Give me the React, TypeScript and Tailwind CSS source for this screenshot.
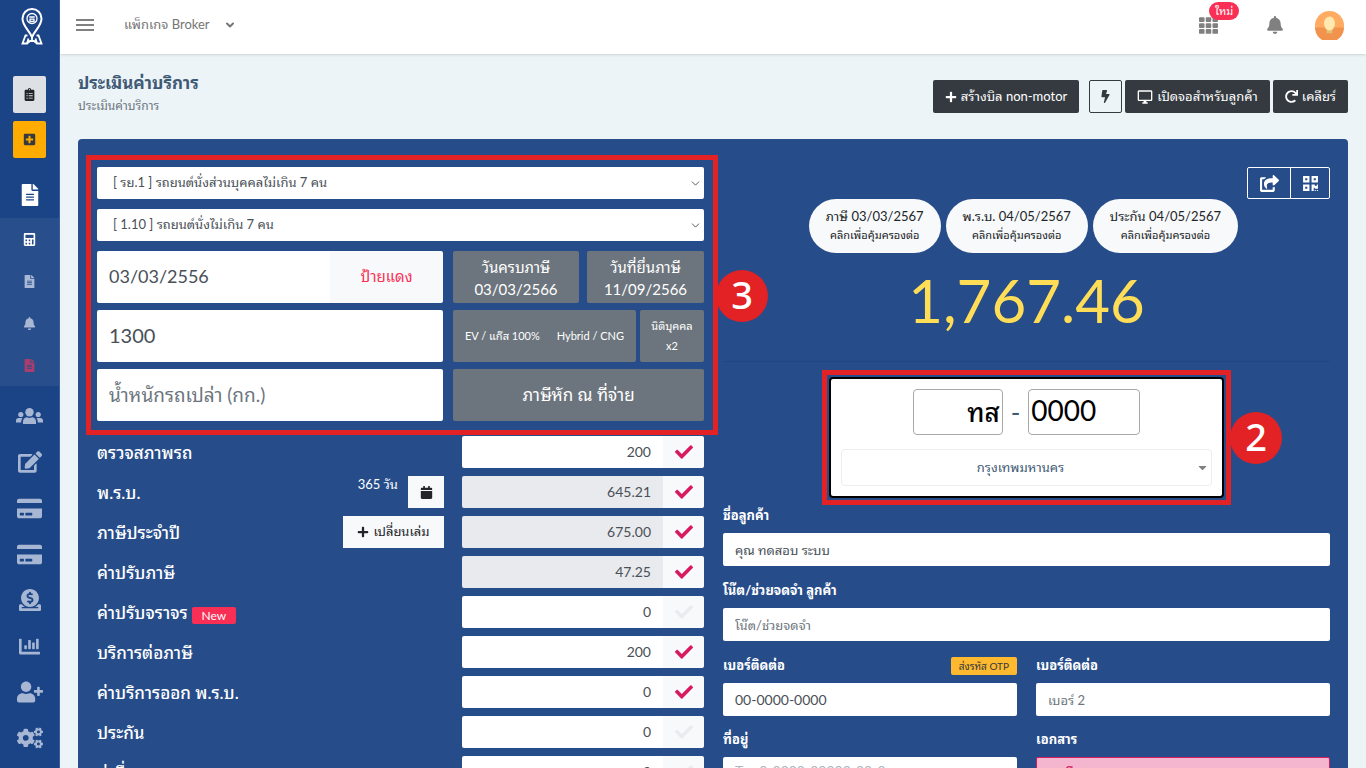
import React from 'react';
import {
  FaBell, FaBolt, FaCalculator, FaCalendar, FaCaretDown, FaChartBar, FaCheck, FaClipboardList,
  FaCogs, FaCreditCard, FaDonate, FaEdit, FaFileAlt, FaPlus, FaPlusSquare, FaQrcode, FaRedo,
  FaShareSquare, FaTh, FaUserPlus,
} from 'react-icons/fa';
import { FiChevronDown } from 'react-icons/fi';
import { MdOutlineDesktopWindows } from 'react-icons/md';

function PeopleIcon({ size }: { size: number }) {
  return (
    <svg viewBox="0 0 27 16" width={size} fill="currentColor" aria-hidden="true">
      <circle cx="13.500" cy="4.200" r="4.200" />
      <path d="M7 16v-2.500C7 11 9 9.300 11 9.300c1.600.8 3.400.8 5 0 2 0 4 1.700 4 4.200V16Z" />
      <circle cx="4.800" cy="6.500" r="2.600" />
      <circle cx="22.200" cy="6.500" r="2.600" />
      <path d="M0 14.500v-2C0 11 1.200 10 2.600 10h4c-.9 1-1.400 2.300-1.400 4.500ZM27 14.500v-2c0-1.500-1.200-2.500-2.600-2.500h-4c.9 1 1.400 2.300 1.400 4.500Z" />
    </svg>
  );
}

const subMenu = [
  { label: 'คำนวณ', icon: FaCalculator, tone: 'text-white' },
  { label: 'เอกสาร', icon: FaFileAlt, tone: 'text-[#a9b8d4]' },
  { label: 'แจ้งเตือน', icon: FaBell, tone: 'text-[#a9b8d4]' },
  { label: 'เอกสารยกเลิก', icon: FaFileAlt, tone: 'text-[#a83d6e]' },
];

const mainMenu = [
  { label: 'ลูกค้า', icon: PeopleIcon, size: 27 },
  { label: 'แก้ไข', icon: FaEdit, size: 24 },
  { label: 'บัตร', icon: FaCreditCard, size: 25 },
  { label: 'ชำระเงิน', icon: FaCreditCard, size: 25 },
  { label: 'รายรับ', icon: FaDonate, size: 22 },
  { label: 'รายงาน', icon: FaChartBar, size: 21 },
  { label: 'เพิ่มผู้ใช้', icon: FaUserPlus, size: 26 },
  { label: 'ตั้งค่า', icon: FaCogs, size: 26 },
];

type Fee = { name: string; value: string; on: boolean; locked?: boolean; extra?: 'days' | 'book' | 'new' };

const fees: Fee[] = [
  { name: 'ตรวจสภาพรถ', value: '200', on: true },
  { name: 'พ.ร.บ.', value: '645.21', on: true, locked: true, extra: 'days' },
  { name: 'ภาษีประจำปี', value: '675.00', on: true, locked: true, extra: 'book' },
  { name: 'ค่าปรับภาษี', value: '47.25', on: true, locked: true },
  { name: 'ค่าปรับจราจร', value: '0', on: false, extra: 'new' },
  { name: 'บริการต่อภาษี', value: '200', on: true },
  { name: 'ค่าบริการออก พ.ร.บ.', value: '0', on: true },
  { name: 'ประกัน', value: '0', on: false },
  { name: 'ค่าอื่นๆ', value: '0', on: false },
];

const renewals = [
  { name: 'ภาษี', date: '03/03/2567' },
  { name: 'พ.ร.บ.', date: '04/05/2567' },
  { name: 'ประกัน', date: '04/05/2567' },
];

function Logo() {
  return (
    <svg viewBox="0 0 24 38" className="h-[38px] w-6" fill="none" stroke="#fff" strokeWidth="2" aria-hidden="true">
      <path d="M12 29C9 22 2.500 18 2.500 10.500a9.500 9.500 0 0 1 19 0C21.500 18 15 22 12 29Z" />
      <circle cx="12" cy="10.500" r="5" strokeWidth="1.300" />
      <path d="M9.300 9h5.400M10 11.200h4v2.200h-4z" strokeWidth="1.300" />
      <path d="M7.500 27.500H5.500L2.500 35.500H7l1.500-5M16.500 27.500h2l3 8H17l-1.500-5M7 35.500l3-2.500h4l3 2.500M12 28v5" strokeWidth="1.800" />
    </svg>
  );
}

function Sidebar() {
  return (
    <aside className="flex w-[60px] shrink-0 flex-col items-center border-r border-[#3d5f98] bg-[#1b4487]">
      <a href="#home" aria-label="หน้าแรก" className="flex h-[54px] items-center pl-1">
        <Logo />
      </a>
      <div className="flex flex-col gap-2 pt-[22px]">
        <button aria-label="รายการ" className="flex h-[37px] w-[33px] items-center justify-center rounded-xs bg-[#dde1e5] text-[#212529]">
          <FaClipboardList size={13} />
        </button>
        <button aria-label="เพิ่มรายการ" className="flex h-[37px] w-[33px] items-center justify-center rounded-xs bg-[#ffab00] text-[#343a40]">
          <FaPlusSquare size={13} />
        </button>
      </div>
      <a href="#bill" aria-label="เอกสาร" className="mt-3.5 flex h-[46px] items-center text-white">
        <FaFileAlt size={22} />
      </a>
      <nav aria-label="เมนูย่อย" className="flex w-full flex-col items-center bg-[#284f8c]">
        {subMenu.map((m) => (
          <a key={m.label} href="#sub" aria-label={m.label} className={`flex h-[42px] items-center ${m.tone}`}>
            <m.icon size={13} />
          </a>
        ))}
      </nav>
      <nav aria-label="เมนูหลัก" className="flex w-full flex-col items-center pt-[7px] text-[#a7b7d3]">
        {mainMenu.map((m) => (
          <a key={m.label} href="#main" aria-label={m.label} className="flex h-[46px] shrink-0 items-center">
            <m.icon size={m.size} />
          </a>
        ))}
      </nav>
    </aside>
  );
}

function Header() {
  return (
    <header className="relative z-10 flex h-[54px] shrink-0 items-center bg-white pr-[22px] pb-1 pl-4 text-[#6c757d] shadow-sm">
      <button aria-label="เมนู" className="flex h-6 w-[18px] flex-col justify-center gap-[3px]">
        <span className="h-0.5 w-full bg-[#808080]" />
        <span className="h-0.5 w-full bg-[#808080]" />
        <span className="h-0.5 w-full bg-[#808080]" />
      </button>
      <button className="ml-[30px] flex items-center gap-3.5 text-[13px] text-[#757575]">
        แพ็กเกจ Broker
        <FiChevronDown size={12} strokeWidth={4} />
      </button>
      <div className="ml-auto flex items-center text-[#808080]">
        <button aria-label="แอป" className="relative mr-12">
          <FaTh size={19} />
          <span className="absolute -top-3.5 left-2.5 rounded-full bg-[#f92f55] px-1.5 text-[11px] leading-[18px] text-white">ใหม่</span>
        </button>
        <button aria-label="แจ้งเตือน" className="mr-[31px]">
          <FaBell size={18} />
        </button>
        <button aria-label="บัญชี">
          <svg viewBox="0 0 30 30" className="size-[29px]">
            <circle cx="15" cy="15" r="15" fill="#ffab61" />
            <path d="M0 17h30a15 15 0 0 1-30 0Z" fill="#f1934d" />
            <path d="M12 17h6v6h-6z" fill="#e5bd6e" />
            <ellipse cx="15" cy="13" rx="5.600" ry="7.300" fill="#ffe9b0" />
          </svg>
        </button>
      </div>
    </header>
  );
}

function TitleBar() {
  const dark = 'flex h-[33px] items-center gap-1 rounded-xs bg-[#343a40] text-white';
  return (
    <div className="flex items-start justify-between">
      <div className="pt-[17px]">
        <h1 className="text-[17px] leading-6 font-bold text-[#3f5a75]">ประเมินค่าบริการ</h1>
        <p className="text-xs leading-[22px] text-[#6c757d]">ประเมินค่าบริการ</p>
      </div>
      <div className="flex pt-[26px] text-[13px]">
        <button className={`${dark} mr-2.5 px-3`}><FaPlus size={12} />สร้างบิล non-motor</button>
        <button aria-label="ด่วน" className="mr-[3px] flex h-[33px] w-[33px] items-center justify-center rounded-xs border border-[#343a40] text-[#343a40]">
          <FaBolt size={13} />
        </button>
        <button className={`${dark} mr-[3px] px-3`}><MdOutlineDesktopWindows size={16} />เปิดจอสำหรับลูกค้า</button>
        <button className={`${dark} px-3`}><FaRedo size={13} />เคลียร์</button>
      </div>
    </div>
  );
}

function SelectBox({ label, value }: { label: string; value: string }) {
  return (
    <div className="relative">
      <select aria-label={label} className="h-8 w-full appearance-none rounded-xs bg-white pr-8 pl-4 text-[13px] text-[#495057]">
        <option>{value}</option>
      </select>
      <FiChevronDown size={13} strokeWidth={1.5} className="pointer-events-none absolute top-[10px] right-0.5 text-[#343a40]" />
    </div>
  );
}

function Vehicle() {
  const gray = 'rounded-xs bg-[#6c757d] text-white';
  const field = 'h-[52px] w-full min-w-0 rounded-xs bg-white px-3 pb-0.5 text-[#495057] placeholder:text-[#6c757d]';
  return (
    <section className="relative">
      <div className="flex flex-col gap-2.5">
        <SelectBox label="ประเภทรถ" value="[ รย.1 ] รถยนต์นั่งส่วนบุคคลไม่เกิน 7 คน" />
        <SelectBox label="รหัสรถ" value="[ 1.10 ] รถยนต์นั่งไม่เกิน 7 คน" />
        <div className="grid grid-cols-[346fr_251fr] gap-x-2.5 gap-y-[7px]">
          <div className="flex">
            <input aria-label="วันจดทะเบียน" defaultValue="03/03/2556" className={`${field} rounded-r-none text-lg`} />
            <button className="w-[113px] shrink-0 rounded-r-xs bg-[#f8f9fa] pb-0.5 text-[15px] text-[#f92f55]">ป้ายแดง</button>
          </div>
          <div className="grid grid-cols-[126fr_117fr] gap-2 text-[15px] leading-[22px]">
            <button className={`${gray} pt-0.5`}>วันครบภาษี<br />03/03/2566</button>
            <button className={`${gray} pt-0.5`}>วันที่ยื่นภาษี<br />11/09/2566</button>
          </div>
          <input aria-label="ซีซี" defaultValue="1300" className={`${field} text-xl`} />
          <div className="flex gap-1 text-[11px]">
            <div className={`${gray} flex grow items-center justify-between px-3`}>
              <button>EV / แก๊ส 100%</button>
              <button>Hybrid / CNG</button>
            </div>
            <button className={`${gray} w-16 leading-5`}>นิติบุคคล<br />x2</button>
          </div>
          <input aria-label="น้ำหนักรถเปล่า" placeholder="น้ำหนักรถเปล่า (กก.)" className={`${field} text-[19px]`} />
          <button className={`${gray} text-[17px]`}>ภาษีหัก ณ ที่จ่าย</button>
        </div>
      </div>
      <div className="pointer-events-none absolute -top-3 -right-3.5 -bottom-3.5 -left-[11px] z-10 border-[5px] border-[#e22224]" />
      <span className="absolute top-[103px] -right-16 z-10 flex size-[52px] items-center justify-center rounded-full bg-[#e22224] pb-1 font-['Noto_Sans'] text-[38px] font-medium text-white">3</span>
    </section>
  );
}

function FeeRow({ fee, index }: { fee: Fee; index: number }) {
  const id = `fee-${index}`;
  return (
    <div className="flex h-8 items-stretch">
      <div className="flex grow items-center pt-0.5">
        <label htmlFor={id} className="text-[17px] font-medium text-white">{fee.name}</label>
        {fee.extra === 'new' && <span className="mt-1 ml-1 rounded-xs bg-[#f92f55] px-2.5 text-xs leading-[17px] text-white">New</span>}
      </div>
      {fee.extra === 'days' && (
        <div className="mr-[18px] flex gap-2.5 text-[13px] text-white">
          <span className="leading-4">365 วัน</span>
          <button aria-label="เลือกวัน" className="flex w-9 items-center justify-center bg-[#f8f9fa] text-[#212529]"><FaCalendar size={13} /></button>
        </div>
      )}
      {fee.extra === 'book' && (
        <button className="mr-[18px] flex w-[101px] items-center justify-center gap-1 bg-[#f8f9fa] text-[13px] text-[#212529]"><FaPlus size={12} />เปลี่ยนเล่ม</button>
      )}
      <input id={id} defaultValue={fee.value} readOnly={fee.locked} className={`w-[201px] rounded-l-xs px-3 text-right text-sm text-[#495057] ${fee.locked ? 'bg-[#e9eaee]' : 'bg-white'}`} />
      <button aria-label={`เลือก ${fee.name}`} className={`flex w-[41px] items-center justify-center rounded-r-xs bg-[#f8f9fa] ${fee.on ? 'text-[#d81b60]' : 'text-[#e9ecef]'}`}>
        <FaCheck size={18} />
      </button>
    </div>
  );
}

function Plate() {
  return (
    <section className="relative mx-auto w-[395px] rounded-sm border-2 border-black bg-white px-2.5 py-2.5">
      <div className="flex items-center justify-center gap-2 text-[26px] text-black">
        <input aria-label="หมวดทะเบียน" defaultValue="ทส" className="h-[46px] w-[90px] rounded-sm border border-[#a8a8a8] px-0.5 pb-1 text-right font-medium" />
        <span className="text-[#3f5a75]">-</span>
        <input aria-label="เลขทะเบียน" defaultValue="0000" className="h-[46px] w-28 rounded-sm border border-[#a8a8a8] px-0.5 pb-1 text-[28px]" />
      </div>
      <div className="relative mt-3.5">
        <select aria-label="จังหวัด" className="h-[37px] w-full appearance-none rounded-sm border border-[#ebedf0] bg-white pr-3 text-[13px] text-[#3f5a75] [text-align-last:center]">
          <option>กรุงเทพมหานคร</option>
        </select>
        <FaCaretDown size={13} className="pointer-events-none absolute top-3 right-[3px] text-[#808080]" />
      </div>
      <div className="pointer-events-none absolute -inset-[9px] z-10 border-[5px] border-[#e22224]" />
      <span className="absolute top-[33px] -right-[60px] z-10 flex size-[52px] items-center justify-center rounded-full bg-[#e22224] pb-1 font-['Noto_Sans'] text-[38px] font-medium text-white">2</span>
    </section>
  );
}

type FieldProps = { id: string; label: string; value?: string; placeholder?: string; action?: string; kind?: 'button' | 'area' };

function Field({ id, label, value, placeholder, action, kind }: FieldProps) {
  return (
    <div>
      <div className="flex h-[18px] items-center justify-between">
        <label htmlFor={id} className="text-[13px] font-bold text-white">{label}</label>
        {action && <button className="h-[18px] rounded-xs bg-[#ffb92e] px-2 text-[10px] text-[#343a40]">{action}</button>}
      </div>
      {kind === 'button' && (
        <button id={id} className="mt-2 h-[33px] w-full rounded-xs border border-[#d81b60] bg-[#f4b6cf] px-6 text-left text-[13px] font-bold text-[#d81b60]">{value}</button>
      )}
      {kind === 'area' && (
        <textarea id={id} placeholder={placeholder} rows={3} className="mt-2 block w-full resize-none rounded-xs bg-white px-3 pt-1 text-sm text-[#495057] placeholder:text-[#adb5bd]" />
      )}
      {!kind && (
        <input id={id} defaultValue={value} placeholder={placeholder} className={`mt-2 block h-[33px] w-full rounded-xs bg-white px-3 text-[#495057] placeholder:text-[#6c757d] ${action ? 'text-sm' : 'text-[13px]'}`} />
      )}
    </div>
  );
}

export default function App() {
  return (
    <div className="flex h-screen overflow-hidden bg-[#ecf4f8] font-['Lato','Noto_Sans_Thai_Looped','Loma','Waree','Garuda','Noto_Serif_Thai',sans-serif]">
      <Sidebar />
      <div className="flex min-w-0 grow flex-col">
        <Header />
        <main className="grow overflow-y-auto px-[18px] [scrollbar-width:none]">
          <TitleBar />
          <div className="mt-[22px] grid grid-cols-2 gap-x-[19px] rounded bg-[#264c8a] pt-7 pr-[18px] pb-6 pl-[19px]">
            <div>
              <Vehicle />
              <div className="mt-[15px] flex flex-col gap-2">
                {fees.map((f, i) => <FeeRow key={i} fee={f} index={i} />)}
              </div>
            </div>
            <div>
              <div className="flex justify-end text-white">
                <button aria-label="แชร์" className="flex h-8 w-11 items-center justify-center rounded-l-xs border"><FaShareSquare size={19} /></button>
                <button aria-label="คิวอาร์โค้ด" className="-ml-px flex h-8 w-10 items-center justify-center rounded-r-xs border"><FaQrcode size={17} /></button>
              </div>
              <div className="flex justify-center gap-[5px] pr-1.5">
                {renewals.map((r) => (
                  <button key={r.name} className="rounded-[27px] bg-[#f8f9fa] px-[17px] py-2 text-[#212529]">
                    <span className="block text-[13px] leading-[18px]">{r.name} {r.date}</span>
                    <span className="block text-[11px] leading-5">คลิกเพื่อคุ้มครองต่อ</span>
                  </button>
                ))}
              </div>
              <p className="mt-[11px] text-center text-6xl leading-[72px] text-[#ffdd57]">1,767.46</p>
              <hr className="mt-[25px] mb-[15px] border-[#234680]" />
              <Plate />
              <div className="mt-[9px] flex flex-col gap-4">
                <Field id="customer" label="ชื่อลูกค้า" value="คุณ ทดสอบ ระบบ" />
                <Field id="note" label="โน๊ต/ช่วยจดจำ ลูกค้า" placeholder="โน๊ต/ช่วยจดจำ" />
                <div className="grid grid-cols-2 gap-x-[19px] gap-y-[15px]">
                  <Field id="phone1" label="เบอร์ติดต่อ" value="00-0000-0000" action="ส่งรหัส OTP" />
                  <Field id="phone2" label="เบอร์ติดต่อ" placeholder="เบอร์ 2" />
                  <Field id="address" label="ที่อยู่" placeholder="Tax 0-0000-00000-00-0" kind="area" />
                  <Field id="docs" label="เอกสาร" value="เลือกเอกสาร" kind="button" />
                </div>
              </div>
            </div>
          </div>
        </main>
      </div>
    </div>
  );
}
